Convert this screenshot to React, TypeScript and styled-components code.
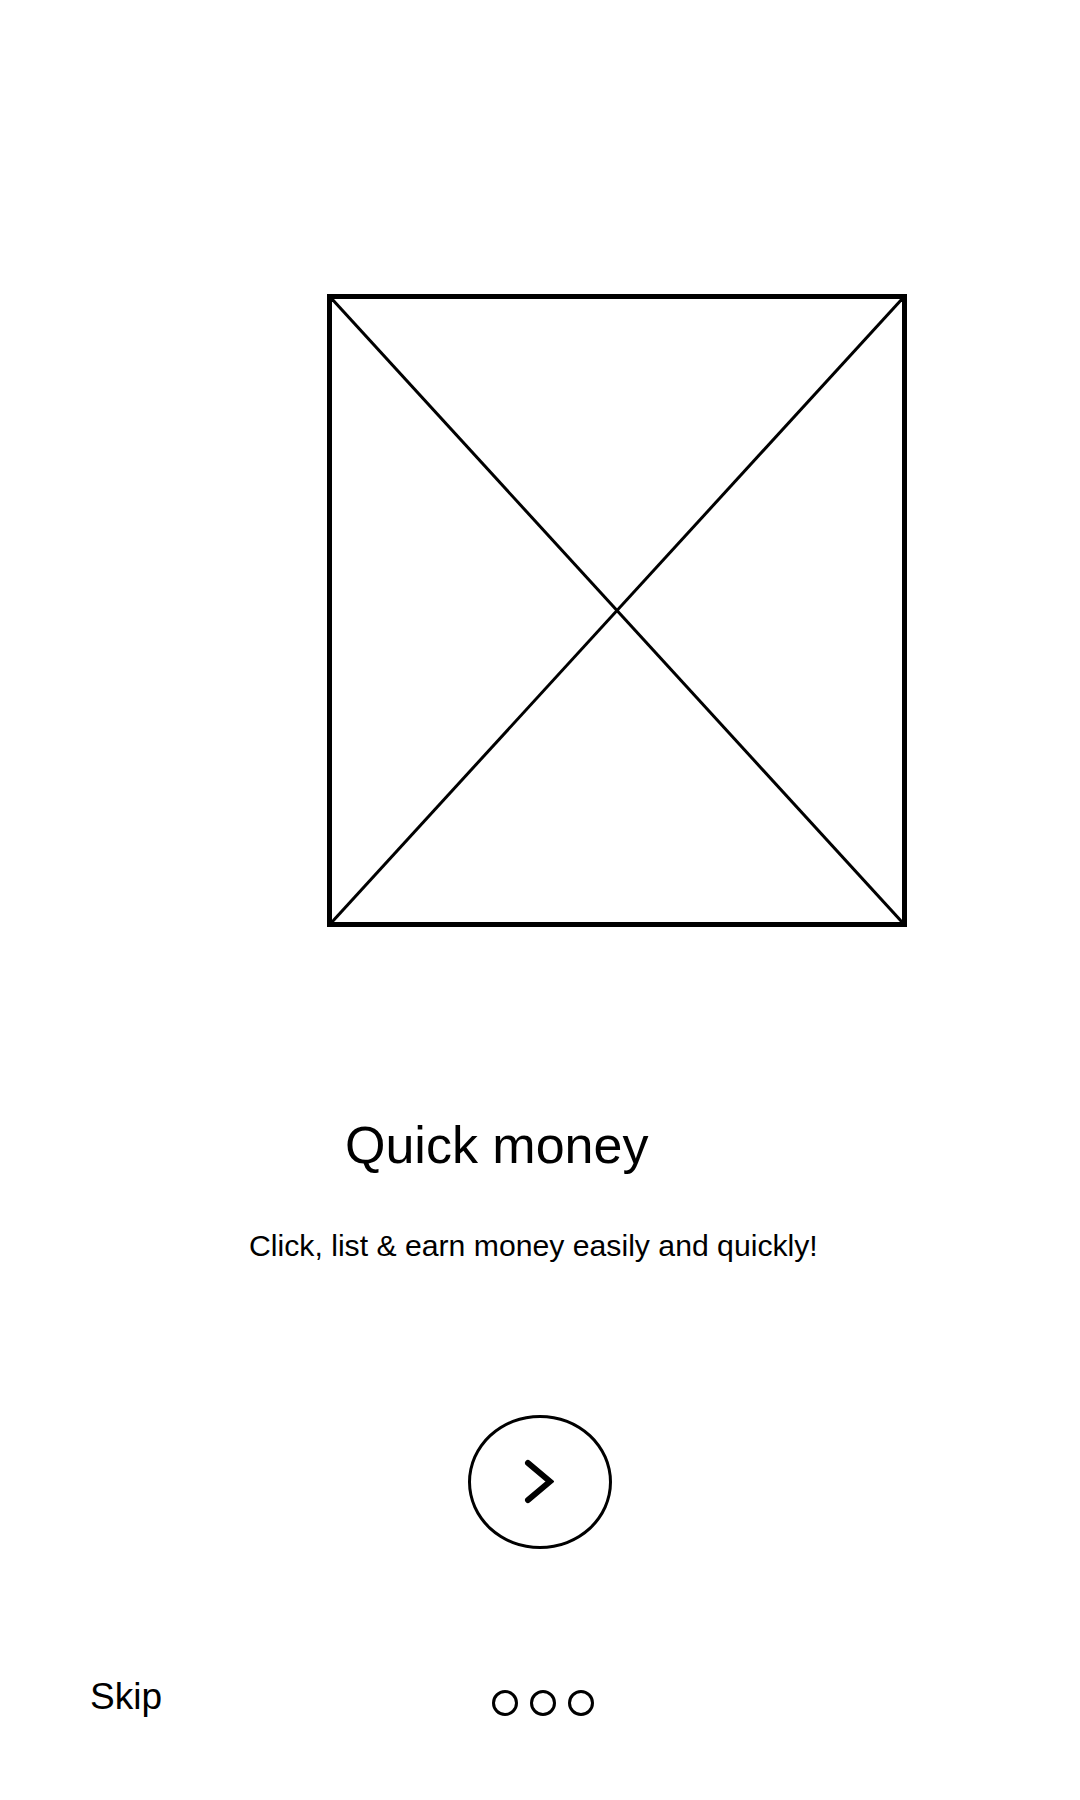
import React from "react";
import styled, { createGlobalStyle } from "styled-components";

const GlobalStyle = createGlobalStyle`
  html, body {
    margin: 0;
    padding: 0;
    background: #ffffff;
  }
  body {
    font-family: "Liberation Sans", Arial, sans-serif;
    color: #000000;
  }
`;

const Screen = styled.div`
  width: 1080px;
  height: 1800px;
  display: flex;
  flex-direction: column;
  align-items: flex-start;
  box-sizing: border-box;
  padding-top: 294px;
  overflow: hidden;
`;

const Placeholder = styled.div`
  margin-left: 327px;
  width: 580px;
  height: 633px;
  border: 5px solid #000;
  box-sizing: border-box;
  svg {
    display: block;
    width: 100%;
    height: 100%;
  }
`;

const Title = styled.h1`
  margin: 192px 0 0 345px;
  font-size: 52px;
  font-weight: normal;
  line-height: 1;
`;

const Subtitle = styled.p`
  margin: 60px 0 0 249px;
  font-size: 30.2px;
  line-height: 1;
`;

const NextButton = styled.button`
  margin: 154px 0 0 468px;
  width: 144px;
  height: 134px;
  border: 3px solid #000;
  border-radius: 50%;
  background: transparent;
  box-sizing: border-box;
  padding: 0;
  display: flex;
  align-items: center;
  justify-content: center;
  cursor: pointer;
  svg {
    margin-right: 3px;
  }
`;

const BottomBar = styled.div`
  margin-top: 127px;
  display: flex;
  align-items: flex-start;
`;

const SkipLink = styled.span`
  margin: 2px 0 0 90px;
  font-size: 37px;
  line-height: 1;
`;

const Dots = styled.div`
  margin: 14px 0 0 330px;
  display: flex;
  gap: 12px;
`;

const Dot = styled.span<{ $active?: boolean }>`
  width: 26px;
  height: 26px;
  border: 3px solid #000;
  border-radius: 50%;
  box-sizing: border-box;
  background: ${(props) => (props.$active ? "#000" : "transparent")};
`;

const App = () => {
  const slides = [0, 1, 2];
  return (
    <>
      <GlobalStyle />
      <Screen>
        <Placeholder>
          <svg viewBox="0 0 100 100" preserveAspectRatio="none">
            <line x1="0" y1="0" x2="100" y2="100" stroke="#000" strokeWidth="3" vectorEffect="non-scaling-stroke" />
            <line x1="100" y1="0" x2="0" y2="100" stroke="#000" strokeWidth="3" vectorEffect="non-scaling-stroke" />
          </svg>
        </Placeholder>
        <Title>Quick money</Title>
        <Subtitle>Click, list &amp; earn money easily and quickly!</Subtitle>
        <NextButton aria-label="Next">
          <svg width="30" height="46" viewBox="0 0 30 46">
            <polyline
              points="4,4 26,22.5 4,41"
              fill="none"
              stroke="#000"
              strokeWidth="6"
              strokeLinecap="round"
              strokeLinejoin="miter"
            />
          </svg>
        </NextButton>
        <BottomBar>
          <SkipLink>Skip</SkipLink>
          <Dots>
            {slides.map((s) => (
              <Dot key={s} />
            ))}
          </Dots>
        </BottomBar>
      </Screen>
    </>
  );
};

export default App;
